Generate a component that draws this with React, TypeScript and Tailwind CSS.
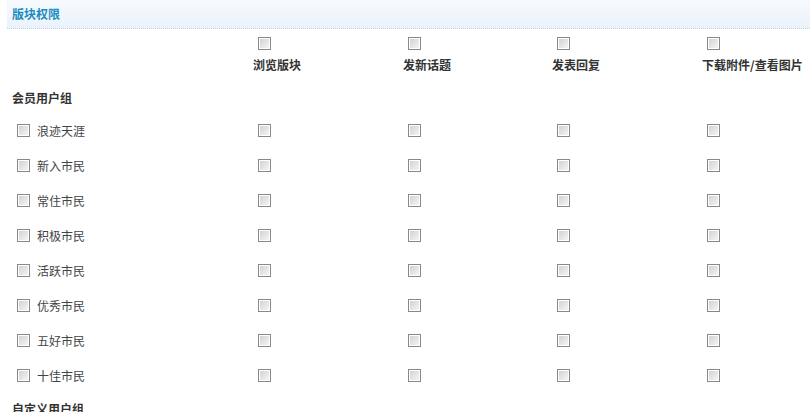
import React from "react";

const font = { fontFamily: '"Noto Sans CJK SC", "Liberation Sans", sans-serif' };

function Box() {
  return (
    <span className="inline-block w-[13px] h-[13px] border border-[#888888] bg-gradient-to-br from-[#cfcfcf] to-[#f8f8f8] shadow-[inset_0_0_0_1px_#ffffff] shrink-0" />
  );
}

const cols = ["浏览版块", "发新话题", "发表回复", "下载附件/查看图片"];
const rows = ["浪迹天涯", "新入市民", "常住市民", "积极市民", "活跃市民", "优秀市民", "五好市民", "十佳市民"];
const grid = "grid grid-cols-[253px_150px_149px_150px_1fr]";

export default function App() {
  return (
    <div className="w-[810px] h-[412px] overflow-hidden bg-white text-[12px] text-[#333]" style={font}>
      <div className="ml-[7px] h-[29px] flex items-center pl-[5px] bg-gradient-to-b from-[#f7fafe] to-[#eaf2fb] border-b border-dotted border-[#c3d0dc]">
        <span className="font-bold text-[#1a8cc0] leading-none">版块权限</span>
      </div>
      <div className={grid + " pt-[8px]"}>
        <div />
        {cols.map((c) => (
          <div key={c} className="flex flex-col items-start">
            <div className="pl-[5px] h-[13px] flex"><Box /></div>
            <div className="mt-[7px] font-bold leading-[16px] whitespace-nowrap text-[#333]">{c}</div>
          </div>
        ))}
      </div>
      <div className="pl-[12px] mt-[17px] font-bold leading-[16px] text-[#333]">会员用户组</div>
      <div className="mt-[7px]">
        {rows.map((r) => (
          <div key={r} className={grid + " h-[35px] items-center"}>
            <div className="flex items-center pl-[17px] gap-[7px]">
              <Box />
              <span className="leading-[16px] text-[#444]">{r}</span>
            </div>
            {cols.map((c) => (
              <div key={c} className="pl-[5px] flex"><Box /></div>
            ))}
          </div>
        ))}
      </div>
      <div className="pl-[12px] mt-[8px] font-bold leading-[16px] text-[#333]">自定义用户组</div>
    </div>
  );
}
